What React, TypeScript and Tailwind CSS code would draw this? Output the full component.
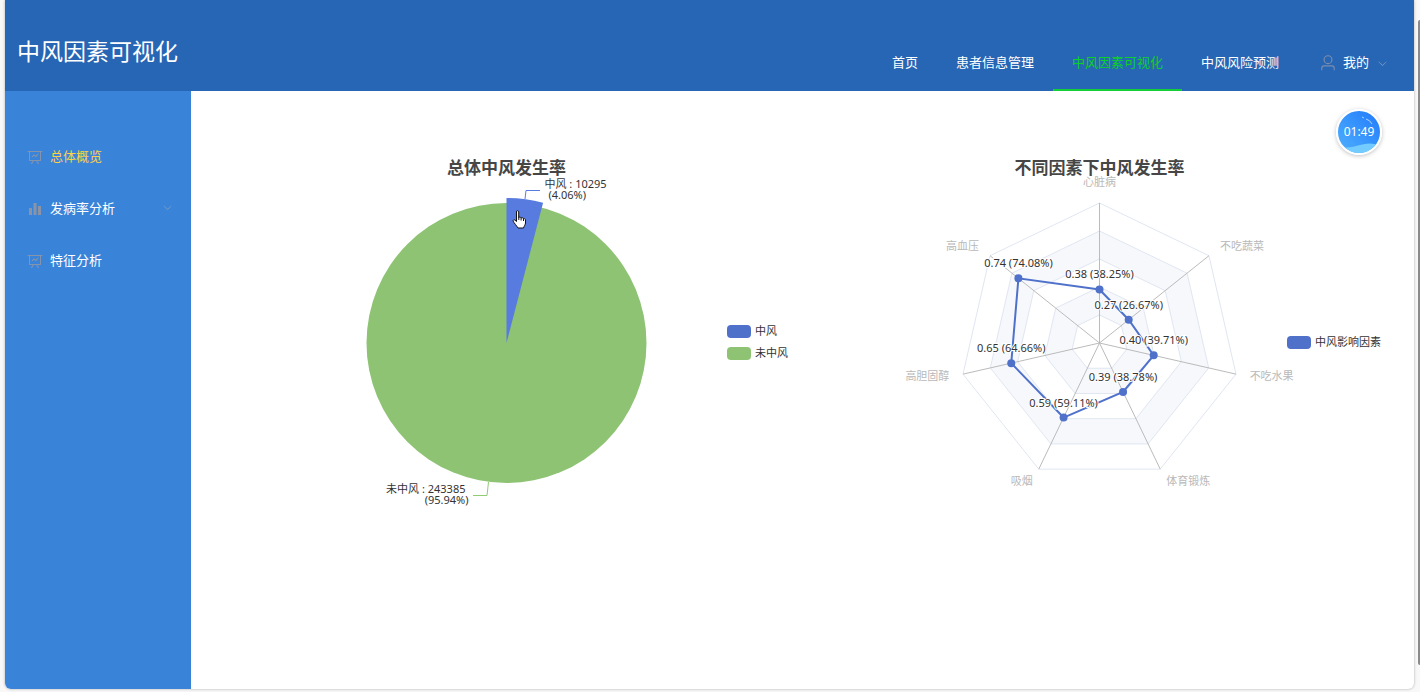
import type { ReactNode } from 'react'

const icons = {
  board:
    'M359.168 768H160a32 32 0 0 1-32-32V192H64a32 32 0 0 1 0-64h896a32 32 0 1 1 0 64h-64v544a32 32 0 0 1-32 32H665.216l110.848 192h-73.856L591.36 768H433.024L322.176 960H248.32zM832 192H192v512h640zM342.656 534.656a32 32 0 1 1-45.312-45.312L444.992 341.76l125.44 94.08L679.04 300.032a32 32 0 1 1 49.92 39.936L581.632 524.224 451.008 426.24 342.656 534.592z',
  bars: 'M416 896V128h192v768zm-288 0V448h192v448zm576 0V320h192v576z',
  user: 'M512 512a192 192 0 1 0 0-384 192 192 0 0 0 0 384zm0 64a256 256 0 1 1 0-512 256 256 0 0 1 0 512zm320 320v-96a96 96 0 0 0-96-96H288a96 96 0 0 0-96 96v96a32 32 0 1 1-64 0v-96a160 160 0 0 1 160-160h448a160 160 0 0 1 160 160v96a32 32 0 1 1-64 0z',
  down: 'M831.872 340.864 512 652.672 192.128 340.864a30.592 30.592 0 0 0-42.752 0 29.12 29.12 0 0 0 0 41.6L489.664 714.24a32 32 0 0 0 44.672 0l340.288-331.712a29.12 29.12 0 0 0 0-41.728 30.592 30.592 0 0 0-42.752 0z',
}

function Icon({ name, className }: { name: keyof typeof icons; className: string }) {
  return (
    <svg viewBox="0 0 1024 1024" fill="currentColor" className={className} aria-hidden="true">
      <path d={icons[name]} />
    </svg>
  )
}

const navLinks = [
  { label: '首页', active: false },
  { label: '患者信息管理', active: false },
  { label: '中风因素可视化', active: true },
  { label: '中风风险预测', active: false },
]

function Header() {
  return (
    <header className="flex h-[91px] shrink-0 items-end justify-between bg-[#2766b4] pr-[7px] pl-3 text-white">
      <h1 className="self-center pt-5 pb-2.5 text-[23px] leading-6">中风因素可视化</h1>
      <nav className="flex text-[13px]">
        {navLinks.map((link) => (
          <a
            key={link.label}
            href="#"
            className={
              link.active
                ? 'flex h-14 items-center border-b-2 border-[#13ce36] px-[19px] pt-0.5 text-[#0bd226]'
                : 'flex h-14 items-center border-b-2 border-transparent px-[19px] pt-0.5'
            }
          >
            {link.label}
          </a>
        ))}
        <button className="flex h-14 items-center border-b-2 border-transparent px-[19px] pt-0.5">
          <Icon name="user" className="ml-0.5 size-[18px] text-[#7c8dac]" />
          <span className="ml-1.5">我的</span>
          <Icon name="down" className="ml-2 size-[11px] text-[#7c9ac4]" />
        </button>
      </nav>
    </header>
  )
}

function Sidebar() {
  return (
    <aside className="w-[186px] shrink-0 bg-[#3984d9] pt-10 text-[13px] text-white">
      <a href="#" className="flex h-[52px] items-center gap-[7px] pr-[18px] pl-[22px] text-[#ffd04b]">
        <Icon name="board" className="size-4 text-[#8593ab]" />
        总体概览
      </a>
      <button className="flex h-[52px] w-full items-center gap-[7px] pr-[18px] pl-[22px]">
        <Icon name="bars" className="size-4 text-[#8a94a6]" />
        发病率分析
        <Icon name="down" className="mb-1 ml-auto size-[11px] text-[#7f9bc4]" />
      </button>
      <a href="#" className="flex h-[52px] items-center gap-[7px] pr-[18px] pl-[22px]">
        <Icon name="board" className="size-4 text-[#8593ab]" />
        特征分析
      </a>
    </aside>
  )
}

interface ChartCardProps {
  title: string
  legend: { label: string; color: string }[]
  children: ReactNode
}

function ChartCard({ title, legend, children }: ChartCardProps) {
  return (
    <section className="min-w-0 flex-1">
      <h2 className="text-center text-[17px] leading-6 font-bold text-[#464646]">{title}</h2>
      <div className="grid">
        <svg
          viewBox="-200.5 -163 401 326"
          className="col-start-1 row-start-1 h-[326px] w-[401px] justify-self-center overflow-visible text-[11px]"
        >
          {children}
        </svg>
        <ul className="col-start-1 row-start-1 mr-3 mb-0.5 self-center justify-self-end text-[11px] leading-[22px] text-[#333]">
          {legend.map((item) => (
            <li key={item.label} className="flex items-center gap-1">
              <span className="h-[13px] w-6 rounded" style={{ backgroundColor: item.color }} />
              {item.label}
            </li>
          ))}
        </ul>
      </div>
    </section>
  )
}

const RADIUS = 140

function PieChart() {
  const angle = 0.0406 * 2 * Math.PI
  const r = RADIUS + 5
  const x = r * Math.sin(angle)
  const y = -r * Math.cos(angle)

  return (
    <>
      <circle r={RADIUS} fill="#8ec374" />
      <path d={`M0 0V${-r}A${r} ${r} 0 0 1 ${x} ${y}Z`} fill="#587bdf" />
      <path d="M18.5 -144L19.5 -152.5H33.5" fill="none" stroke="#587bdf" />
      <path d="M-18 139L-19.5 152.5H-33.5" fill="none" stroke="#91cc75" />
      <g fill="#333">
        <text x="38" y="-155">中风 : 10295</text>
        <text x="42" y="-144">(4.06%)</text>
        <text x="-41" y="150" textAnchor="end">未中风 : 243385</text>
        <text x="-38" y="161" textAnchor="end">(95.94%)</text>
      </g>
      {/* hand cursor over the highlighted slice */}
      <g transform="translate(6 -133)" stroke="#111">
        <path
          d="M4 1.2C4.8 0.3 6.2 0.8 6.2 2V7.5C7 6.8 8.3 7 8.6 8C9.5 7.4 10.7 7.7 11 8.7C12 8.3 13 9 13 10V13C13 14.5 11.6 16 11 18H5.5C4 15.5 1.5 13 0.7 11.2C0.2 10 1.5 9.3 2.5 10.2L4 11.5Z"
          fill="#fff"
          strokeLinejoin="round"
        />
        <path d="M6.3 7V10M8.6 8V10.5M11 8.7V11" />
      </g>
    </>
  )
}

const factors = [
  { name: '心脏病', value: 0.3825, label: '0.38 (38.25%)' },
  { name: '高血压', value: 0.7408, label: '0.74 (74.08%)' },
  { name: '高胆固醇', value: 0.6466, label: '0.65 (64.66%)' },
  { name: '吸烟', value: 0.5911, label: '0.59 (59.11%)' },
  { name: '体育锻炼', value: 0.3878, label: '0.39 (38.78%)' },
  { name: '不吃水果', value: 0.3971, label: '0.40 (39.71%)' },
  { name: '不吃蔬菜', value: 0.2667, label: '0.27 (26.67%)' },
]

const rings = [
  { scale: 1, fill: '#fff' },
  { scale: 0.8, fill: '#f6f8fc' },
  { scale: 0.6, fill: '#fff' },
  { scale: 0.4, fill: '#f6f8fc' },
  { scale: 0.2, fill: '#fff' },
]

// axes run counter-clockwise from the top
function point(index: number, scale: number) {
  const angle = (index * 2 * Math.PI) / factors.length
  return { x: -RADIUS * scale * Math.sin(angle), y: -RADIUS * scale * Math.cos(angle) }
}

function polygon(scales: number[]) {
  return scales
    .map((scale, i) => {
      const p = point(i, scale)
      return `${p.x},${p.y}`
    })
    .join(' ')
}

function anchorFor(x: number) {
  if (Math.abs(x) < 1) return 'middle'
  return x < 0 ? 'end' : 'start'
}

function RadarChart() {
  return (
    <>
      {rings.map((ring) => (
        <polygon
          key={ring.scale}
          points={polygon(factors.map(() => ring.scale))}
          fill={ring.fill}
          stroke="#e0e6f1"
        />
      ))}
      {factors.map((factor, i) => {
        const end = point(i, 1)
        const name = point(i, 1.1)
        return (
          <g key={factor.name}>
            <line x2={end.x} y2={end.y} stroke="#bbb" />
            <text x={name.x} y={name.y + (i === 0 ? -3 : 3)} textAnchor={anchorFor(name.x)} fill="#b9b9b9">
              {factor.name}
            </text>
          </g>
        )
      })}
      <polygon points={polygon(factors.map((f) => f.value))} fill="none" stroke="#4f71ca" strokeWidth="2" />
      {factors.map((factor, i) => {
        const p = point(i, factor.value)
        return <circle key={factor.name} cx={p.x} cy={p.y} r="4" fill="#4f71ca" />
      })}
      {factors.map((factor, i) => {
        const p = point(i, factor.value)
        return (
          <text
            key={factor.name}
            x={p.x}
            y={p.y - 11}
            textAnchor="middle"
            fill="#333"
            stroke="#fff"
            strokeWidth="2"
            paintOrder="stroke"
          >
            {factor.label}
          </text>
        )
      })}
    </>
  )
}

function Timer() {
  return (
    <div className="absolute top-[18px] right-8 grid size-[46px] place-items-center overflow-hidden rounded-full border-2 border-white bg-linear-to-tr from-[#4fb0fd] to-[#2379fb] text-[12px] text-white shadow-[0_1px_4px_rgba(0,0,0,0.25)]">
      <svg viewBox="0 0 42 42" className="col-start-1 row-start-1 size-[42px]" aria-hidden="true">
        <path d="M4 37Q13 37 22 34T42 34V42H4Z" fill="#74cbff" />
        <path d="M24 6l2 1M28 8q4 1 6 5" fill="none" stroke="#a8d4ff" />
      </svg>
      <span className="col-start-1 row-start-1">01:49</span>
    </div>
  )
}

export default function App() {
  return (
    <div className="flex h-screen bg-[#f8f8f9] pb-[3px] pl-[5px] font-['Noto_Sans','Noto_Sans_CJK_SC',sans-serif]">
      <div className="flex flex-1 flex-col overflow-hidden rounded-b-md bg-white shadow-[0_0_3px_rgba(0,0,0,0.3)]">
        <Header />
        <div className="flex flex-1">
          <Sidebar />
          <main className="relative flex flex-1 gap-[6px] pt-[65px] pr-[21px] pl-[22px]">
            <ChartCard
              title="总体中风发生率"
              legend={[
                { label: '中风', color: '#4f71ca' },
                { label: '未中风', color: '#8ec374' },
              ]}
            >
              <PieChart />
            </ChartCard>
            <ChartCard title="不同因素下中风发生率" legend={[{ label: '中风影响因素', color: '#4f71ca' }]}>
              <RadarChart />
            </ChartCard>
            <Timer />
          </main>
        </div>
      </div>
      {/* page scrollbar */}
      <div className="ml-1 flex w-[2px] flex-col pt-5 pb-6">
        <div className="flex-1 rounded-l-xs bg-[#8a8a8a]" />
      </div>
    </div>
  )
}
